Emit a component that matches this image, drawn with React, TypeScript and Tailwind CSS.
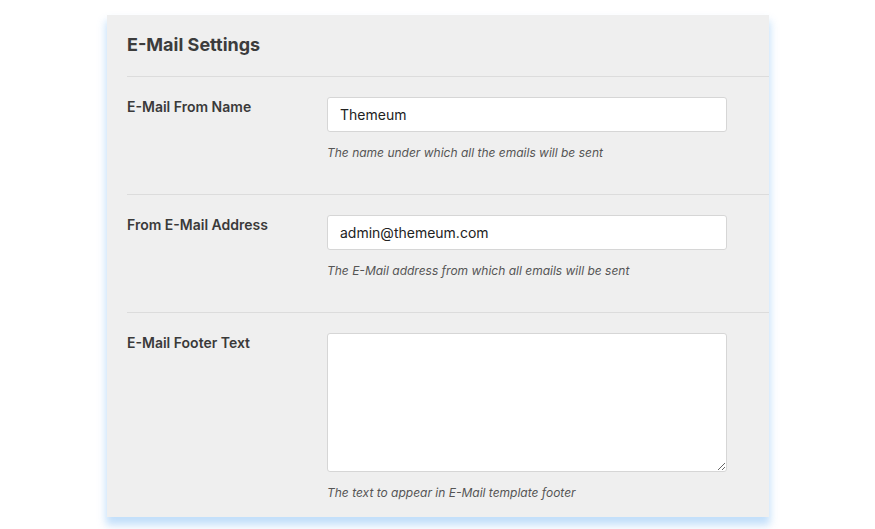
import React from "react";

const font = { fontFamily: "Inter, 'Noto Sans', sans-serif" };

function Row({
  label,
  help,
  children,
  last,
}: {
  label: string;
  help: string;
  children: React.ReactNode;
  last?: boolean;
}) {
  return (
    <div className={`flex pt-5 ${last ? "pb-4" : "pb-[33px] border-b border-[#dcdcdc]"}`}>
      <div className="w-[200px] shrink-0 text-[14px] leading-5 font-semibold text-[#3a3a3a]">
        {label}
      </div>
      <div className="flex flex-col">
        {children}
        <p className="mt-[13px] text-[12px] leading-4 italic text-[#555]">{help}</p>
      </div>
    </div>
  );
}

export default function App() {
  return (
    <div className="min-h-screen bg-white pt-[15px]" style={font}>
      <div className="ml-[107px] w-[662px] bg-[#efefef] pl-5 shadow-[0_7px_8px_1px_rgba(120,185,245,0.45)]">
        <div className="pt-[16px] pb-[17px] border-b border-[#dcdcdc]">
          <h2 className="text-[18px] leading-7 font-bold text-[#3c3c3c]">E-Mail Settings</h2>
        </div>
        <Row label="E-Mail From Name" help="The name under which all the emails will be sent">
          <input
            defaultValue="Themeum"
            className="w-[400px] h-[35px] rounded-[3px] border border-[#d6d6d6] bg-white px-[12px] text-[14px] text-[#222] outline-none"
          />
        </Row>
        <Row label="From E-Mail Address" help="The E-Mail address from which all emails will be sent">
          <input
            defaultValue="admin@themeum.com"
            className="w-[400px] h-[35px] rounded-[3px] border border-[#d6d6d6] bg-white px-[12px] text-[14px] text-[#222] outline-none"
          />
        </Row>
        <Row label="E-Mail Footer Text" help="The text to appear in E-Mail template footer" last>
          <textarea className="block w-[400px] h-[139px] rounded-[3px] border border-[#d6d6d6] bg-white px-[12px] py-2 text-[14px] text-[#222] outline-none" />
        </Row>
      </div>
    </div>
  );
}
